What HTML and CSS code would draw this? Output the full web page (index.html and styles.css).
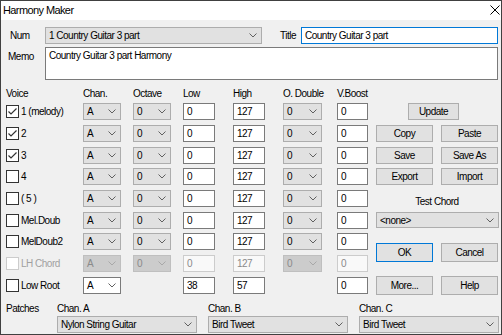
FILE: index.html
```html
<!DOCTYPE html>
<html lang="en">
<head>
  <meta charset="UTF-8">
  <title>Harmony Maker</title>
  <link rel="stylesheet" href="styles.css">
</head>
<body>

<div class="window">

  <!-- Title bar -->
  <div class="titlebar">
    <span>Harmony Maker</span>
    <svg class="close" width="10" height="10" viewBox="0 0 10 10">
      <path d="M0.5 0.5 L9.5 9.5 M9.5 0.5 L0.5 9.5" stroke="#000" stroke-width="1" fill="none"/>
    </svg>
  </div>

  <div class="content">

    <!-- Num / Title -->
    <div class="num-row">
      <span class="lbl-num">Num</span>
      <div class="combo combo-num"><span>1 Country Guitar 3 part</span><svg class="chev" width="8" height="5" viewBox="0 0 8 5"><polyline points="0.5,0.5 4,4 7.5,0.5" fill="none" stroke="#606060"/></svg></div>
      <span class="lbl-title">Title</span>
      <div class="field field-title focus">Country Guitar 3 part</div>
    </div>

    <!-- Memo -->
    <div class="memo-row">
      <span class="lbl-memo">Memo</span>
      <div class="field memo">Country Guitar 3 part Harmony</div>
    </div>

    <div class="main">

      <!-- Voices table -->
      <div class="voices">
        <span>Voice</span><span>Chan.</span><span>Octave</span><span>Low</span><span>High</span><span>O. Double</span><span>V.Boost</span>

        <label class="check"><span class="box"><svg width="11" height="11" viewBox="0 0 11 11"><polyline points="1.5,5.5 4,8 9.5,2.5" fill="none" stroke="#333" stroke-width="1.2"/></svg></span>1 (melody)</label>
        <div class="combo w-chan"><span>A</span><svg class="chev" width="8" height="5" viewBox="0 0 8 5"><polyline points="0.5,0.5 4,4 7.5,0.5" fill="none" stroke="#606060"/></svg></div>
        <div class="combo w-chan"><span>0</span><svg class="chev" width="8" height="5" viewBox="0 0 8 5"><polyline points="0.5,0.5 4,4 7.5,0.5" fill="none" stroke="#606060"/></svg></div>
        <div class="field w-num">0</div>
        <div class="field w-num">127</div>
        <div class="combo w-od"><span>0</span><svg class="chev" width="8" height="5" viewBox="0 0 8 5"><polyline points="0.5,0.5 4,4 7.5,0.5" fill="none" stroke="#606060"/></svg></div>
        <div class="field w-vb">0</div>

        <label class="check"><span class="box"><svg width="11" height="11" viewBox="0 0 11 11"><polyline points="1.5,5.5 4,8 9.5,2.5" fill="none" stroke="#333" stroke-width="1.2"/></svg></span>2</label>
        <div class="combo w-chan"><span>A</span><svg class="chev" width="8" height="5" viewBox="0 0 8 5"><polyline points="0.5,0.5 4,4 7.5,0.5" fill="none" stroke="#606060"/></svg></div>
        <div class="combo w-chan"><span>0</span><svg class="chev" width="8" height="5" viewBox="0 0 8 5"><polyline points="0.5,0.5 4,4 7.5,0.5" fill="none" stroke="#606060"/></svg></div>
        <div class="field w-num">0</div>
        <div class="field w-num">127</div>
        <div class="combo w-od"><span>0</span><svg class="chev" width="8" height="5" viewBox="0 0 8 5"><polyline points="0.5,0.5 4,4 7.5,0.5" fill="none" stroke="#606060"/></svg></div>
        <div class="field w-vb">0</div>

        <label class="check"><span class="box"><svg width="11" height="11" viewBox="0 0 11 11"><polyline points="1.5,5.5 4,8 9.5,2.5" fill="none" stroke="#333" stroke-width="1.2"/></svg></span>3</label>
        <div class="combo w-chan"><span>A</span><svg class="chev" width="8" height="5" viewBox="0 0 8 5"><polyline points="0.5,0.5 4,4 7.5,0.5" fill="none" stroke="#606060"/></svg></div>
        <div class="combo w-chan"><span>0</span><svg class="chev" width="8" height="5" viewBox="0 0 8 5"><polyline points="0.5,0.5 4,4 7.5,0.5" fill="none" stroke="#606060"/></svg></div>
        <div class="field w-num">0</div>
        <div class="field w-num">127</div>
        <div class="combo w-od"><span>0</span><svg class="chev" width="8" height="5" viewBox="0 0 8 5"><polyline points="0.5,0.5 4,4 7.5,0.5" fill="none" stroke="#606060"/></svg></div>
        <div class="field w-vb">0</div>

        <label class="check"><span class="box"></span>4</label>
        <div class="combo w-chan"><span>A</span><svg class="chev" width="8" height="5" viewBox="0 0 8 5"><polyline points="0.5,0.5 4,4 7.5,0.5" fill="none" stroke="#606060"/></svg></div>
        <div class="combo w-chan"><span>0</span><svg class="chev" width="8" height="5" viewBox="0 0 8 5"><polyline points="0.5,0.5 4,4 7.5,0.5" fill="none" stroke="#606060"/></svg></div>
        <div class="field w-num">0</div>
        <div class="field w-num">127</div>
        <div class="combo w-od"><span>0</span><svg class="chev" width="8" height="5" viewBox="0 0 8 5"><polyline points="0.5,0.5 4,4 7.5,0.5" fill="none" stroke="#606060"/></svg></div>
        <div class="field w-vb">0</div>

        <label class="check"><span class="box"></span>( 5 )</label>
        <div class="combo w-chan"><span>A</span><svg class="chev" width="8" height="5" viewBox="0 0 8 5"><polyline points="0.5,0.5 4,4 7.5,0.5" fill="none" stroke="#606060"/></svg></div>
        <div class="combo w-chan"><span>0</span><svg class="chev" width="8" height="5" viewBox="0 0 8 5"><polyline points="0.5,0.5 4,4 7.5,0.5" fill="none" stroke="#606060"/></svg></div>
        <div class="field w-num">0</div>
        <div class="field w-num">127</div>
        <div class="combo w-od"><span>0</span><svg class="chev" width="8" height="5" viewBox="0 0 8 5"><polyline points="0.5,0.5 4,4 7.5,0.5" fill="none" stroke="#606060"/></svg></div>
        <div class="field w-vb">0</div>

        <label class="check"><span class="box"></span>Mel.Doub</label>
        <div class="combo w-chan"><span>A</span><svg class="chev" width="8" height="5" viewBox="0 0 8 5"><polyline points="0.5,0.5 4,4 7.5,0.5" fill="none" stroke="#606060"/></svg></div>
        <div class="combo w-chan"><span>0</span><svg class="chev" width="8" height="5" viewBox="0 0 8 5"><polyline points="0.5,0.5 4,4 7.5,0.5" fill="none" stroke="#606060"/></svg></div>
        <div class="field w-num">0</div>
        <div class="field w-num">127</div>
        <div class="combo w-od"><span>0</span><svg class="chev" width="8" height="5" viewBox="0 0 8 5"><polyline points="0.5,0.5 4,4 7.5,0.5" fill="none" stroke="#606060"/></svg></div>
        <div class="field w-vb">0</div>

        <label class="check"><span class="box"></span>MelDoub2</label>
        <div class="combo w-chan"><span>A</span><svg class="chev" width="8" height="5" viewBox="0 0 8 5"><polyline points="0.5,0.5 4,4 7.5,0.5" fill="none" stroke="#606060"/></svg></div>
        <div class="combo w-chan"><span>0</span><svg class="chev" width="8" height="5" viewBox="0 0 8 5"><polyline points="0.5,0.5 4,4 7.5,0.5" fill="none" stroke="#606060"/></svg></div>
        <div class="field w-num">0</div>
        <div class="field w-num">127</div>
        <div class="combo w-od"><span>0</span><svg class="chev" width="8" height="5" viewBox="0 0 8 5"><polyline points="0.5,0.5 4,4 7.5,0.5" fill="none" stroke="#606060"/></svg></div>
        <div class="field w-vb">0</div>

        <!-- disabled row -->
        <label class="check off"><span class="box"></span>LH Chord</label>
        <div class="combo w-chan off"><span>A</span><svg class="chev" width="8" height="5" viewBox="0 0 8 5"><polyline points="0.5,0.5 4,4 7.5,0.5" fill="none" stroke="#a8a8a8"/></svg></div>
        <div class="combo w-chan off"><span>0</span><svg class="chev" width="8" height="5" viewBox="0 0 8 5"><polyline points="0.5,0.5 4,4 7.5,0.5" fill="none" stroke="#a8a8a8"/></svg></div>
        <div class="field w-num off">0</div>
        <div class="field w-num off">127</div>
        <div class="combo w-od off"><span>0</span><svg class="chev" width="8" height="5" viewBox="0 0 8 5"><polyline points="0.5,0.5 4,4 7.5,0.5" fill="none" stroke="#a8a8a8"/></svg></div>
        <div class="field w-vb off">0</div>

        <label class="check"><span class="box"></span>Low Root</label>
        <div class="combo w-chan edit"><span>A</span><svg class="chev" width="8" height="5" viewBox="0 0 8 5"><polyline points="0.5,0.5 4,4 7.5,0.5" fill="none" stroke="#606060"/></svg></div>
        <span></span>
        <div class="field w-num">38</div>
        <div class="field w-num">57</div>
        <span></span>
        <div class="field w-vb">0</div>
      </div>

      <!-- Buttons on the right -->
      <div class="side">
        <div class="btn update">Update</div>
        <div class="btn r3 c1">Copy</div>
        <div class="btn r3 c2">Paste</div>
        <div class="btn r4 c1">Save</div>
        <div class="btn r4 c2">Save As</div>
        <div class="btn r5 c1">Export</div>
        <div class="btn r5 c2">Import</div>
        <div class="test-lbl">Test Chord</div>
        <div class="combo test-chord"><span>&lt;none&gt;</span><svg class="chev" width="8" height="5" viewBox="0 0 8 5"><polyline points="0.5,0.5 4,4 7.5,0.5" fill="none" stroke="#606060"/></svg></div>
        <div class="btn tall ok c1 default">OK</div>
        <div class="btn tall ok c2">Cancel</div>
        <div class="btn tall r10 c1">More...</div>
        <div class="btn tall r10 c2">Help</div>
      </div>
    </div>

    <!-- Patches -->
    <div class="patches">
      <span>Patches</span><span>Chan. A</span><span>Chan. B</span><span>Chan. C</span>
      <span></span>
      <div class="combo w-patch"><span>Nylon String Guitar</span><svg class="chev" width="8" height="5" viewBox="0 0 8 5"><polyline points="0.5,0.5 4,4 7.5,0.5" fill="none" stroke="#606060"/></svg></div>
      <div class="combo w-patch"><span>Bird Tweet</span><svg class="chev" width="8" height="5" viewBox="0 0 8 5"><polyline points="0.5,0.5 4,4 7.5,0.5" fill="none" stroke="#606060"/></svg></div>
      <div class="combo w-patch"><span>Bird Tweet</span><svg class="chev" width="8" height="5" viewBox="0 0 8 5"><polyline points="0.5,0.5 4,4 7.5,0.5" fill="none" stroke="#606060"/></svg></div>
    </div>

  </div>
</div>

</body>
</html>
```

FILE: styles.css
```css
body {
    margin: 0;
    background: #fff;
    font-family: "Liberation Sans", Arial, sans-serif;
    font-size: 10px;
    letter-spacing: -0.5px;
    color: #000;
}
.window {
    width: 502px;
    height: 335px;
    box-sizing: border-box;
    border: 1px solid #404040;
    background: #f0f0f0;
    overflow: hidden;
}
.titlebar {
    height: 19px;
    background: #fff;
    display: flex;
    align-items: center;
    justify-content: space-between;
    padding: 0 1px 1px 2px;
    box-sizing: border-box;
    font-size: 11px;
    letter-spacing: -0.6px;
}
.content {
    padding: 7px 2px 0 5px;
}

/* generic controls */
.combo {
    display: flex;
    align-items: center;
    justify-content: space-between;
    box-sizing: border-box;
    height: 17px;
    border: 1px solid #adadad;
    background: #e1e1e1;
    padding: 0 4px 0 3px;
    white-space: nowrap;
}
.combo.edit {
    background: #fff;
    border-color: #7a7a7a;
}
.combo.off {
    background: #cccccc;
    border-color: #bfbfbf;
    color: #8a8a8a;
}
.field {
    box-sizing: border-box;
    height: 17px;
    border: 1px solid #7a7a7a;
    background: #fff;
    padding: 0 3px;
    line-height: 15px;
}
.field.off {
    border-color: #cccccc;
    background: #f9f9f9;
    color: #8a8a8a;
}
.field.focus {
    border-color: #0078d7;
}
.btn {
    box-sizing: border-box;
    width: 57px;
    height: 17px;
    border: 1px solid #adadad;
    background: #e1e1e1;
    display: flex;
    align-items: center;
    justify-content: center;
}
.btn.tall {
    height: 19px;
}
.btn.default {
    border-color: #0078d7;
}

/* top rows */
.num-row {
    display: flex;
    align-items: center;
    height: 17px;
}
.lbl-num {
    margin-left: 4px;
    width: 35px;
}
.combo-num {
    width: 217px;
}
.lbl-title {
    margin-left: 18px;
    width: 21px;
}
.field-title {
    width: 197px;
}
.memo-row {
    display: flex;
    margin-top: 3px;
}
.lbl-memo {
    margin-left: 2px;
    width: 37px;
    padding-top: 4px;
}
.memo {
    width: 453px;
    height: 33px;
    line-height: 14px;
    padding-top: 1px;
}

/* voices table */
.main {
    display: flex;
    margin-top: 5px;
}
.voices {
    display: grid;
    grid-template-columns: 77px 50px 50px 50px 50px 54px 39px;
    grid-template-rows: 16px repeat(9, 21.7px);
    align-items: center;
}
.w-chan { width: 38px; }
.w-num { width: 32px; }
.w-od { width: 39px; }
.w-vb { width: 31px; }

.check {
    display: flex;
    align-items: center;
    gap: 2px;
}
.box {
    width: 13px;
    height: 13px;
    box-sizing: border-box;
    border: 1px solid #333;
    background: #fff;
    display: flex;
}
.check.off {
    color: #a0a0a0;
}
.check.off .box {
    border-color: #cccccc;
}

/* right side buttons */
.side {
    display: grid;
    grid-template-columns: 65px 57px;
    grid-template-rows: 16px repeat(9, 21.7px);
    align-items: center;
}
.c1 { grid-column: 1; }
.c2 { grid-column: 2; }
.r3 { grid-row: 3; }
.r4 { grid-row: 4; }
.r5 { grid-row: 5; }
.r10 { grid-row: 10; }
.update {
    grid-column: 1 / 3;
    grid-row: 2;
    width: 51px;
    margin-left: 32px;
}
.test-lbl {
    grid-column: 1 / 3;
    grid-row: 6;
    align-self: end;
    text-align: center;
    line-height: 14px;
}
.test-chord {
    grid-column: 1 / 3;
    grid-row: 7;
    width: 123px;
    height: 16px;
}
.ok {
    grid-row: 8 / 10;
}

/* patches */
.patches {
    display: grid;
    grid-template-columns: 51px 151px 151px 141px;
    grid-template-rows: 16px 17px;
    align-items: center;
    margin-top: 4px;
}
.w-patch {
    width: 140px;
}
```
